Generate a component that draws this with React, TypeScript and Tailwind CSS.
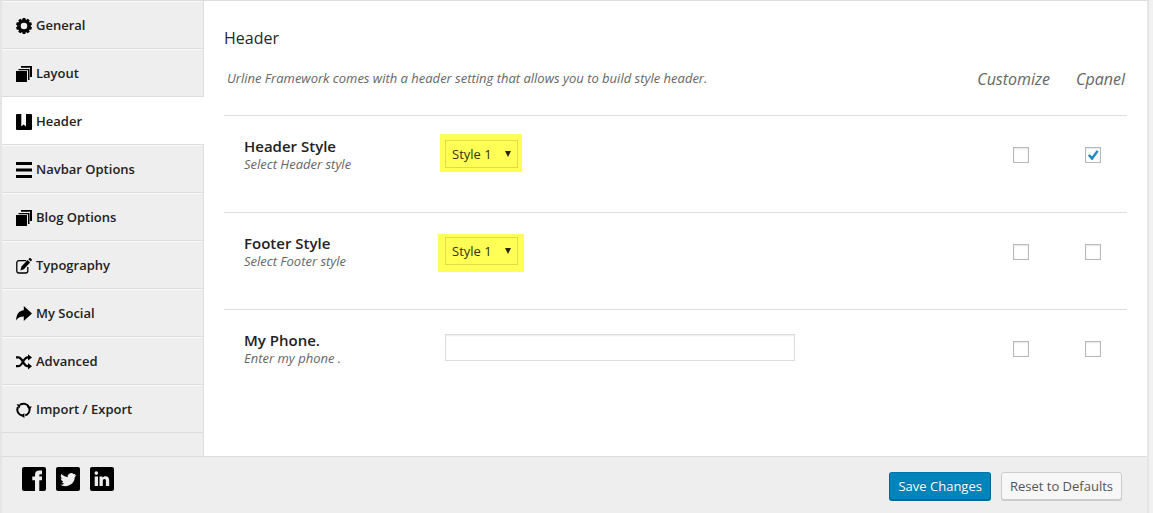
import { useState, type ReactNode } from "react";

const stackIcon = (
  <>
    <path d="M0 5h11v11H0z" />
    <path d="M2.5 3H13.5v11H12V4.2H2.5z" />
    <path d="M5 0h11v11h-2V1.8H5z" />
  </>
);

const teeth = [0, 36, 72, 108, 144, 180, 216, 252, 288, 324];

const gearIcon = (
  <>
    <circle cx="8" cy="8" r="5" fill="none" stroke="currentColor" strokeWidth="3.4" />
    {teeth.map((a) => (
      <path key={a} d="M6.3 2.2 6.7 0h2.6l.4 2.2z" transform={`rotate(${a} 8 8)`} />
    ))}
  </>
);

const bookmarkIcon = (
  <path fillRule="evenodd" d="M1 0h14a1 1 0 0 1 1 1v14a1 1 0 0 1-1 1H1a1 1 0 0 1-1-1V1a1 1 0 0 1 1-1zm4.3 0v12.600L7.600 10.600l2.400 2V0z" />
);

const barsIcon = <path d="M0 0h16v3H0zM0 6.500h16v3H0zM0 13h16v3H0z" />;

const editIcon = (
  <>
    <path d="M10.200 2.600H3A2.200 2.200 0 0 0 .8 4.800v8A2.200 2.200 0 0 0 3 15h6.600a2.200 2.200 0 0 0 2.200-2.200V9" fill="none" stroke="currentColor" strokeWidth="1.300" />
    <path d="M4.400 12.400 5.400 8.600 11.600 2l2.500 2.500-6.200 6.700zM12.400 1.200 13.300.3q.7-.6 1.400 0l.9.9q.6.7 0 1.400l-.8 1z" />
  </>
);

const shareIcon = <path d="M7.800 0 16 7.500 7.800 15V10.600C4.600 10.600 2 11.600.2 14.400 0 8.800 3 4.400 7.800 4.200z" />;

const shuffleIcon = (
  <>
    <path d="M0 3.400h2.200C6.800 3.400 7.200 12.200 11.600 12.200h1.600M0 12.200h2.200C6.800 12.200 7.200 3.400 11.600 3.400h1.600" fill="none" stroke="currentColor" strokeWidth="2.200" />
    <path d="M12 .2 16 3.400 12 6.600zM12 9l4 3.200-4 3.400z" />
  </>
);

const cycleIcon = (
  <>
    <path d="M4.200 2.700A6 6 0 0 1 12.900 5M13.400 6.600A6 6 0 0 1 9.200 13.400M6.200 13.600A6 6 0 0 1 2 5" fill="none" stroke="currentColor" strokeWidth="2" />
    <path d="M.6 2.200 4.800 2.400 3.400 6.400zM10.800 4.400h5L13.600 8.200zM8.400 11.200v4.800L4.600 13.600z" />
  </>
);

const menu: { label: string; icon: ReactNode }[] = [
  { label: "General", icon: gearIcon },
  { label: "Layout", icon: stackIcon },
  { label: "Header", icon: bookmarkIcon },
  { label: "Navbar Options", icon: barsIcon },
  { label: "Blog Options", icon: stackIcon },
  { label: "Typography", icon: editIcon },
  { label: "My Social", icon: shareIcon },
  { label: "Advanced", icon: shuffleIcon },
  { label: "Import / Export", icon: cycleIcon },
];

const socials = [
  {
    name: "Facebook",
    shape: <path d="M13 24V13.200h-2.700V9.500H13V8C13 4.800 14.800 3.600 17.400 3.600H20v3.600h-1.600c-.8 0-1.100.4-1.100 1.200v1.100H20v3.700h-2.700V24z" />,
  },
  {
    name: "Twitter",
    shape: (
      <path d="M20.500 8.100a7 7 0 0 1-2 .5 3.400 3.400 0 0 0 .9-1.900 7 7 0 0 1-1.600.5 3.700 3.700 0 0 0-6.300 3A9.800 9.800 0 0 1 5.400 7.100a3.700 3.700 0 0 0 .8 4.600 3.400 3.400 0 0 1-1.500-.4 3.700 3.700 0 0 0 2.500 3.400 3.500 3.500 0 0 1-1.300.3 3.500 3.500 0 0 0 2.400 1.700A7 7 0 0 1 4 17.600a9.600 9.600 0 0 0 14.800-7.700 7 7 0 0 0 1.700-1.800z" />
    ),
  },
  {
    name: "LinkedIn",
    shape: (
      <path d="M4.700 9.500H8V19H4.700zM6.300 4.300a1.800 1.800 0 1 1 0 3.600 1.800 1.800 0 0 1 0-3.600zM9.500 9.500h3.100v1.300c.5-.9 1.500-1.600 2.900-1.600 2.700 0 3.700 1.700 3.700 4.300V19h-3.300v-4.900c0-1.300-.3-2.200-1.400-2.200-1.200 0-1.700.9-1.700 2.200V19H9.500z" />
    ),
  },
];

function Tick({ label, on = false }: { label: string; on?: boolean }) {
  const [checked, setChecked] = useState(on);
  return (
    <label className="grid size-4 place-items-center">
      <input
        type="checkbox"
        aria-label={label}
        checked={checked}
        onChange={(e) => setChecked(e.target.checked)}
        className="col-start-1 row-start-1 size-4 appearance-none border border-[#b4b9be] bg-white shadow-[inset_0_1px_2px_rgba(0,0,0,0.1)]"
      />
      {checked && (
        <svg viewBox="0 0 12 12" className="pointer-events-none z-10 col-start-1 row-start-1 size-3 fill-[#1e8cbe]" aria-hidden="true">
          <path d="M.8 6.600 2.800 5.200 5 7.600 9.600 1.200 11.600 2.400 5.600 11H4.600z" />
        </svg>
      )}
    </label>
  );
}

function Row({ id, title, hint, cpanel, children }: { id: string; title: string; hint: string; cpanel?: boolean; children: ReactNode }) {
  return (
    <div className="flex h-[97px] items-start border-t border-[#ddd] pr-[26px] pl-5">
      <div className="w-[201px] shrink-0 pt-5">
        <label htmlFor={id} className="block text-[15px] leading-5 font-semibold text-[#222]">
          {title}
        </label>
        <p className="text-[13px] leading-4 text-[#666] italic">{hint}</p>
      </div>
      <div className="flex-1 pt-6">{children}</div>
      <div className="flex gap-14 pt-[31px]">
        <Tick label={`${title} customize`} />
        <Tick label={`${title} cpanel`} on={cpanel} />
      </div>
    </div>
  );
}

function StyleSelect({ id, className }: { id: string; className: string }) {
  return (
    <div className={`grid w-fit items-center bg-[#ffff55] ${className}`}>
      <select id={id} className="col-start-1 row-start-1 h-7 w-[73px] appearance-none border border-[#dddd4a] bg-transparent pt-0.5 pl-1.5 text-[13px] text-[#32320f]">
        <option>Style 1</option>
        <option>Style 2</option>
      </select>
      <svg viewBox="0 0 6 6" className="pointer-events-none col-start-1 row-start-1 mr-[7px] size-1.5 justify-self-end fill-[#26260c]" aria-hidden="true">
        <path d="M0 0h6L3 6z" />
      </svg>
    </div>
  );
}

export default function App() {
  const [active, setActive] = useState("Header");
  return (
    <div className="min-h-screen bg-[#f1f1f1] pr-1 font-['Open_Sans','Noto_Sans',sans-serif]">
      <div className="flex min-h-screen flex-col border-t border-r-2 border-l-2 border-t-[#ddd] border-r-[#e5e5e5] border-l-[#e5e5e5]">
        <div className="flex bg-white">
          <nav className="flex w-[202px] shrink-0 flex-col">
            {menu.map(({ label, icon }) => (
              <button
                key={label}
                type="button"
                onClick={() => setActive(label)}
                className={`flex h-12 items-center gap-1 border-b border-b-[#ddd] pt-0.5 pl-3.5 text-left text-[13px] font-semibold text-[#222] ${
                  active === label ? "bg-white" : "border-r border-r-[#ddd] bg-[#eee] shadow-[inset_0_1px_0_#fafafa]"
                }`}
              >
                <svg viewBox="0 0 16 16" className="size-4 shrink-0 fill-current text-black" aria-hidden="true">
                  {icon}
                </svg>
                {label}
              </button>
            ))}
            <div className="h-[23px] border-r border-[#ddd] bg-[#eee]" />
          </nav>
          <main className="min-w-0 flex-1 px-5 pt-[23px]">
            <h1 className="text-base leading-7 font-medium text-[#23282d]">Header</h1>
            <div className="mt-2.5 flex h-[53px] items-start justify-between pl-[3px] text-[#666] italic">
              <p className="pt-1.5 text-[13px] leading-5">Urline Framework comes with a header setting that allows you to build style header.</p>
              <div className="flex gap-[26px] pt-[5px] text-base leading-6">
                <span>Customize</span>
                <span className="pr-0.5">Cpanel</span>
              </div>
            </div>
            <Row id="header-style" title="Header Style" hint="Select Header style" cpanel>
              <StyleSelect id="header-style" className="-mx-[5px] -mt-1.5 pt-1.5 pr-1 pb-1 pl-[5px]" />
            </Row>
            <Row id="footer-style" title="Footer Style" hint="Select Footer style">
              <StyleSelect id="footer-style" className="-mx-[7px] -mt-[3px] pt-[3px] pr-1.5 pb-[7px] pl-[7px]" />
            </Row>
            <Row id="phone" title="My Phone." hint="Enter my phone .">
              <input
                id="phone"
                type="text"
                className="h-[27px] w-full max-w-[350px] border border-[#ddd] bg-white px-1.5 text-[13px] shadow-[inset_0_1px_2px_rgba(0,0,0,0.07)]"
              />
            </Row>
          </main>
        </div>
        <footer className="flex flex-1 items-start justify-between border-t border-[#ddd] bg-[#eee] pr-[25px] pl-5">
          <div className="flex gap-2.5 pt-2.5">
            {socials.map(({ name, shape }) => (
              <a key={name} href={`#${name.toLowerCase()}`} aria-label={name} className="size-6 rounded-[2px] bg-black">
                <svg viewBox="0 0 24 24" className="size-6 fill-[#eee]" aria-hidden="true">
                  {shape}
                </svg>
              </a>
            ))}
          </div>
          <div className="flex gap-2.5 pt-[15px] text-[13px]">
            <button
              type="button"
              className="h-7 rounded-[3px] border border-[#006799] border-t-[#0073aa] bg-[#0085ba] px-2 pt-0.5 text-white shadow-[0_1px_0_#006799] [text-shadow:0_-1px_1px_#006799]"
            >
              Save Changes
            </button>
            <button type="button" className="h-7 rounded-[3px] border border-[#ccc] bg-[#f7f7f7] px-2 pt-0.5 text-[#555] shadow-[0_1px_0_#ccc]">
              Reset to Defaults
            </button>
          </div>
        </footer>
      </div>
    </div>
  );
}
